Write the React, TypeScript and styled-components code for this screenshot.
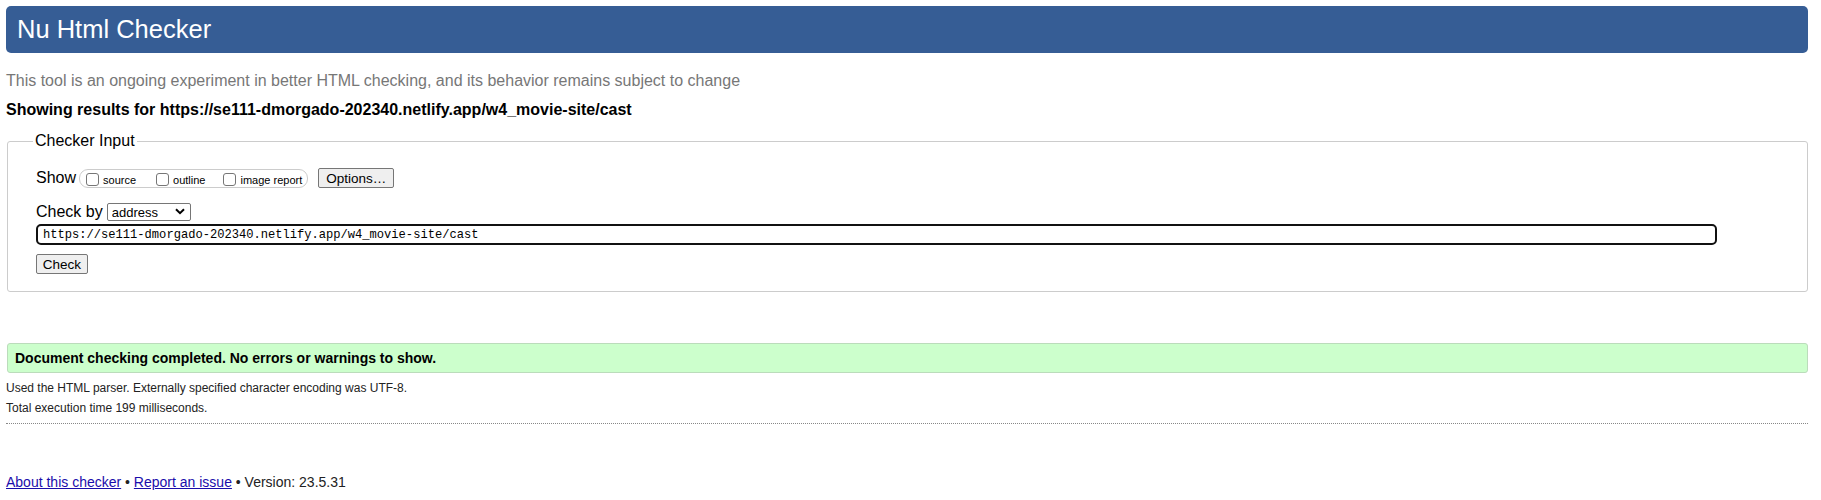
import React from 'react';
import styled, { createGlobalStyle } from 'styled-components';

const GlobalStyle = createGlobalStyle`
  html, body {
    margin: 0;
    padding: 0;
    background: #ffffff;
  }
  body {
    font-family: "Liberation Sans", Arial, sans-serif;
    color: #000;
  }
`;

const Page = styled.div`
  padding: 6px 13px 0 6px;
`;

const Header = styled.header`
  display: flex;
  align-items: center;
  height: 47px;
  padding-left: 11px;
  background-color: #365d95;
  border-radius: 5px;
`;

const Title = styled.h1`
  margin: 0;
  font-size: 25.5px;
  font-weight: normal;
  color: #ffffff;
`;

const Intro = styled.p`
  margin: 19px 0 0;
  font-size: 16px;
  line-height: 18px;
  color: #777777;
`;

const Results = styled.p`
  margin: 11px 0 0;
  font-size: 16px;
  font-weight: bold;
  line-height: 18px;
`;

const Fieldset = styled.fieldset`
  margin: 13px 0 0 1px;
  padding: 0 0 17px 28px;
  border: 1px solid #cccccc;
  border-radius: 3px;
`;

const Legend = styled.legend`
  margin-left: -3px;
  padding: 0 2px;
  font-size: 16px;
  line-height: 18px;
`;

const Row = styled.div<{ $top: number }>`
  display: flex;
  align-items: center;
  margin-top: ${(p) => p.$top}px;
`;

const Label = styled.span`
  font-size: 16px;
  line-height: 18px;
`;

const OptionGroup = styled.span`
  display: flex;
  align-items: flex-end;
  height: 16px;
  margin-left: 3px;
  padding: 0 5px 1px 6px;
  border: 1px solid #cccccc;
  border-radius: 9px;
`;

const Choice = styled.label<{ $gap?: number }>`
  display: flex;
  align-items: flex-end;
  margin-right: ${(p) => p.$gap ?? 0}px;
  font-size: 11px;
  line-height: 12px;
`;

const Box = styled.input`
  width: 13px;
  height: 13px;
  margin: 0 4px 0 0;
  appearance: none;
  border: 1px solid #767676;
  border-radius: 3px;
  background: #ffffff;
`;

const Button = styled.button<{ $width: number }>`
  width: ${(p) => p.$width}px;
  height: 20px;
  padding: 0;
  font-family: "Liberation Sans", Arial, sans-serif;
  font-size: 13.5px;
  color: #000;
  background: #efefef;
  border: 1px solid #767676;
  border-radius: 2px;
`;

const SelectWrap = styled.span`
  position: relative;
  display: inline-flex;
  margin-left: 4px;
`;

const Select = styled.select`
  width: 84px;
  height: 18px;
  padding: 0 0 0 4px;
  appearance: none;
  font-family: "Liberation Sans", Arial, sans-serif;
  font-size: 13px;
  color: #000;
  background: #ffffff;
  border: 1px solid #767676;
  border-radius: 2px;
`;

const Chevron = styled.svg`
  position: absolute;
  right: 6px;
  top: 5px;
  pointer-events: none;
`;

const UrlInput = styled.input`
  box-sizing: border-box;
  width: 1681px;
  height: 21px;
  padding: 0 0 0 5px;
  font-family: "Liberation Mono", "DejaVu Sans Mono", monospace;
  font-size: 12.1px;
  color: #000;
  border: 2px solid #111111;
  border-radius: 5px;
  outline: none;
`;

const Success = styled.div`
  display: flex;
  align-items: center;
  height: 28px;
  margin: 51px 0 0 1px;
  padding-left: 7px;
  background: #ccffcc;
  border: 1px solid #bbdcbb;
  border-radius: 3px;
  font-size: 14px;
  font-weight: bold;
`;

const Detail = styled.p<{ $top: number }>`
  margin: ${(p) => p.$top}px 0 0;
  font-size: 12px;
  line-height: 15px;
  color: #222222;
`;

const Rule = styled.hr`
  margin: 7px 0 0;
  border: none;
  border-top: 1px dotted #888888;
`;

const Footer = styled.p`
  margin: 50px 0 0;
  font-size: 14px;
  line-height: 17px;
  color: #222222;
`;

const FooterLink = styled.a`
  color: #1a0dab;
  text-decoration: underline;
`;

export default function App() {
  const url = 'https://se111-dmorgado-202340.netlify.app/w4_movie-site/cast';
  return (
    <Page>
      <GlobalStyle />
      <Header>
        <Title>Nu Html Checker</Title>
      </Header>
      <Intro>This tool is an ongoing experiment in better HTML checking, and its behavior remains subject to change</Intro>
      <Results>Showing results for {url}</Results>
      <Fieldset>
        <Legend>Checker Input</Legend>
        <Row $top={18}>
          <Label>Show</Label>
          <OptionGroup>
            <Choice $gap={20}>
              <Box type="checkbox" />source
            </Choice>
            <Choice $gap={18}>
              <Box type="checkbox" />outline
            </Choice>
            <Choice>
              <Box type="checkbox" />image report
            </Choice>
          </OptionGroup>
          <Button $width={76} style={{ marginLeft: 10 }}>Options…</Button>
        </Row>
        <Row $top={15}>
          <Label>Check by</Label>
          <SelectWrap>
            <Select defaultValue="address">
              <option value="address">address</option>
              <option value="file">file upload</option>
              <option value="text">text input</option>
            </Select>
            <Chevron width="10" height="7" viewBox="0 0 10 7">
              <path d="M1 1.2 L5 5.2 L9 1.2" fill="none" stroke="#000" strokeWidth="2" />
            </Chevron>
          </SelectWrap>
        </Row>
        <Row $top={3}>
          <UrlInput defaultValue={url} />
        </Row>
        <Row $top={9}>
          <Button $width={52}>Check</Button>
        </Row>
      </Fieldset>
      <Success>Document checking completed. No errors or warnings to show.</Success>
      <Detail $top={8}>Used the HTML parser. Externally specified character encoding was UTF-8.</Detail>
      <Detail $top={5}>Total execution time 199 milliseconds.</Detail>
      <Rule />
      <Footer>
        <FooterLink href="#about">About this checker</FooterLink> • <FooterLink href="#issue">Report an issue</FooterLink> • Version: 23.5.31
      </Footer>
    </Page>
  );
}
